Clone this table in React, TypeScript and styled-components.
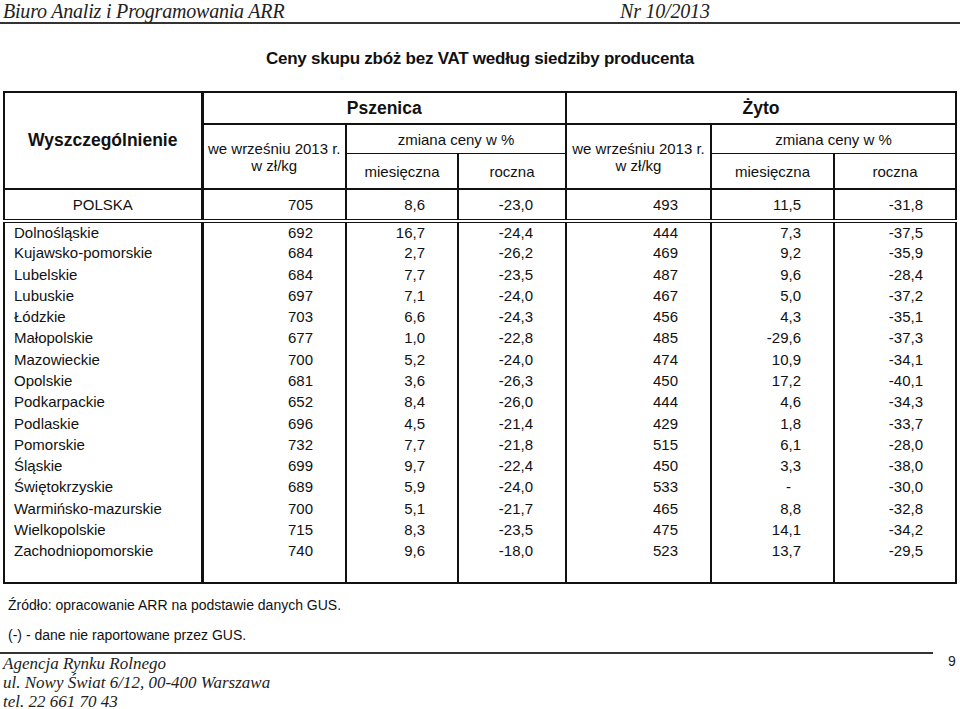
import React from "react";
import styled, { createGlobalStyle } from "styled-components";

const Global = createGlobalStyle`
  html, body { margin: 0; padding: 0; background: #fff; }
  body { font-family: "Liberation Sans", Arial, sans-serif; color: #111; }
`;

const Page = styled.div`
  width: 960px;
  height: 709px;
  overflow: hidden;
  display: flex;
  flex-direction: column;
`;

const TopBar = styled.header`
  height: 22px;
  display: grid;
  grid-template-columns: 617px 1fr;
  align-items: center;
  padding-left: 3px;
  border-bottom: 2px solid #333;
  font-family: "Liberation Serif", "Times New Roman", serif;
  font-style: italic;
  font-size: 20px;
  letter-spacing: -0.2px;
  color: #222;
`;

const Title = styled.h1`
  margin: 25px 0 0;
  height: 20px;
  line-height: 20px;
  text-align: center;
  font-family: "Liberation Sans Narrow", "Liberation Sans", Arial, sans-serif;
  font-weight: bold;
  font-size: 17px;
  letter-spacing: -0.25px;
  color: #111;
`;

const Table = styled.table`
  margin: 22px 0 0 3px;
  width: 952px;
  border-collapse: collapse;
  table-layout: fixed;
  border: 2px solid #111;
  font-size: 15px;
`;

const HeadCell = styled.th<{ $bold?: boolean; $thick?: boolean; $bottom?: number; $h?: number }>`
  font-weight: ${(p) => (p.$bold ? "bold" : "normal")};
  font-size: ${(p) => (p.$bold ? "17.5px" : "15px")};
  text-align: center;
  vertical-align: middle;
  padding: 0;
  height: ${(p) => p.$h ?? 30}px;
  line-height: 17px;
  border-right: ${(p) => (p.$thick ? 3 : 2)}px solid #111;
  border-bottom: ${(p) => p.$bottom ?? 2}px solid #111;
  white-space: nowrap;
  color: #111;
`;

const PolskaRow = styled.tr`
  height: 32px;
  border-bottom: 4px double #111;
`;

const Cell = styled.td<{ $name?: boolean; $thick?: boolean; $pad?: number }>`
  padding: 0 ${(p) => (p.$name ? 0 : p.$pad ?? 32)}px 0 ${(p) => (p.$name ? 9 : 0)}px;
  text-align: ${(p) => (p.$name ? "left" : "right")};
  border-right: ${(p) => (p.$thick ? 3 : 2)}px solid #111;
  white-space: nowrap;
  color: #111;
`;

const CenterCell = styled(Cell)`
  text-align: center;
  padding: 0;
`;

const DataRow = styled.tr`
  height: 21.27px;
  line-height: 17px;
`;

const SpacerRow = styled.tr`
  height: 22px;
`;

const Note = styled.p<{ $top: number }>`
  margin: ${(p) => p.$top}px 0 0 8px;
  font-size: 14px;
  line-height: 17px;
  color: #111;
`;

const FooterRow = styled.footer`
  margin-top: 8px;
  display: flex;
  align-items: flex-start;
`;

const Address = styled.address`
  width: 933px;
  border-top: 2px solid #333;
  padding-left: 3px;
  box-sizing: border-box;
  font-family: "Liberation Serif", "Times New Roman", serif;
  font-style: italic;
  font-size: 17px;
  line-height: 19px;
  color: #222;
  display: flex;
  flex-direction: column;
`;

const PageNo = styled.span`
  margin: 1px 0 0 15px;
  font-size: 14px;
  line-height: 17px;
  color: #222;
`;

const rows: string[][] = [
  ["Dolnośląskie", "692", "16,7", "-24,4", "444", "7,3", "-37,5"],
  ["Kujawsko-pomorskie", "684", "2,7", "-26,2", "469", "9,2", "-35,9"],
  ["Lubelskie", "684", "7,7", "-23,5", "487", "9,6", "-28,4"],
  ["Lubuskie", "697", "7,1", "-24,0", "467", "5,0", "-37,2"],
  ["Łódzkie", "703", "6,6", "-24,3", "456", "4,3", "-35,1"],
  ["Małopolskie", "677", "1,0", "-22,8", "485", "-29,6", "-37,3"],
  ["Mazowieckie", "700", "5,2", "-24,0", "474", "10,9", "-34,1"],
  ["Opolskie", "681", "3,6", "-26,3", "450", "17,2", "-40,1"],
  ["Podkarpackie", "652", "8,4", "-26,0", "444", "4,6", "-34,3"],
  ["Podlaskie", "696", "4,5", "-21,4", "429", "1,8", "-33,7"],
  ["Pomorskie", "732", "7,7", "-21,8", "515", "6,1", "-28,0"],
  ["Śląskie", "699", "9,7", "-22,4", "450", "3,3", "-38,0"],
  ["Świętokrzyskie", "689", "5,9", "-24,0", "533", "-", "-30,0"],
  ["Warmińsko-mazurskie", "700", "5,1", "-21,7", "465", "8,8", "-32,8"],
  ["Wielkopolskie", "715", "8,3", "-23,5", "475", "14,1", "-34,2"],
  ["Zachodniopomorskie", "740", "9,6", "-18,0", "523", "13,7", "-29,5"],
];

const widths = [198, 144, 112, 108, 145, 123, 122];

export default function App() {
  return (
    <Page>
      <Global />
      <TopBar>
        <span>Biuro Analiz i Programowania ARR</span>
        <span>Nr 10/2013</span>
      </TopBar>
      <Title>Ceny skupu zbóż bez VAT według siedziby producenta</Title>
      <Table>
        <colgroup>
          {widths.map((w, i) => (
            <col key={i} style={{ width: w }} />
          ))}
        </colgroup>
        <thead>
          <tr>
            <HeadCell rowSpan={3} $bold $thick>
              Wyszczególnienie
            </HeadCell>
            <HeadCell colSpan={3} $bold $h={30}>
              Pszenica
            </HeadCell>
            <HeadCell colSpan={3} $bold $h={30}>
              Żyto
            </HeadCell>
          </tr>
          <tr>
            <HeadCell rowSpan={2}>
              we wrześniu 2013 r.
              <br />w zł/kg
            </HeadCell>
            <HeadCell colSpan={2} $bottom={1} $h={28}>
              zmiana ceny w %
            </HeadCell>
            <HeadCell rowSpan={2}>
              we wrześniu 2013 r.
              <br />w zł/kg
            </HeadCell>
            <HeadCell colSpan={2} $bottom={1} $h={28}>
              zmiana ceny w %
            </HeadCell>
          </tr>
          <tr>
            <HeadCell $h={34}>miesięczna</HeadCell>
            <HeadCell $h={34}>roczna</HeadCell>
            <HeadCell $h={34}>miesięczna</HeadCell>
            <HeadCell $h={34}>roczna</HeadCell>
          </tr>
        </thead>
        <tbody>
          <PolskaRow>
            <CenterCell $thick>POLSKA</CenterCell>
            <Cell>705</Cell>
            <Cell>8,6</Cell>
            <Cell>-23,0</Cell>
            <Cell>493</Cell>
            <Cell>11,5</Cell>
            <Cell>-31,8</Cell>
          </PolskaRow>
          {rows.map((r) => (
            <DataRow key={r[0]}>
              <Cell $name $thick>
                {r[0]}
              </Cell>
              {r.slice(1).map((v, i) => (
                <Cell key={i} $pad={v === "-" ? 42 : 32}>
                  {v}
                </Cell>
              ))}
            </DataRow>
          ))}
          <SpacerRow>
            <Cell $thick />
            <Cell />
            <Cell />
            <Cell />
            <Cell />
            <Cell />
            <Cell />
          </SpacerRow>
        </tbody>
      </Table>
      <Note $top={13}>Źródło: opracowanie ARR na podstawie danych GUS.</Note>
      <Note $top={13}>(-) - dane nie raportowane przez GUS.</Note>
      <FooterRow>
        <Address>
          <span>Agencja Rynku Rolnego</span>
          <span>ul. Nowy Świat 6/12, 00-400 Warszawa</span>
          <span>tel. 22 661 70 43</span>
        </Address>
        <PageNo>9</PageNo>
      </FooterRow>
    </Page>
  );
}
